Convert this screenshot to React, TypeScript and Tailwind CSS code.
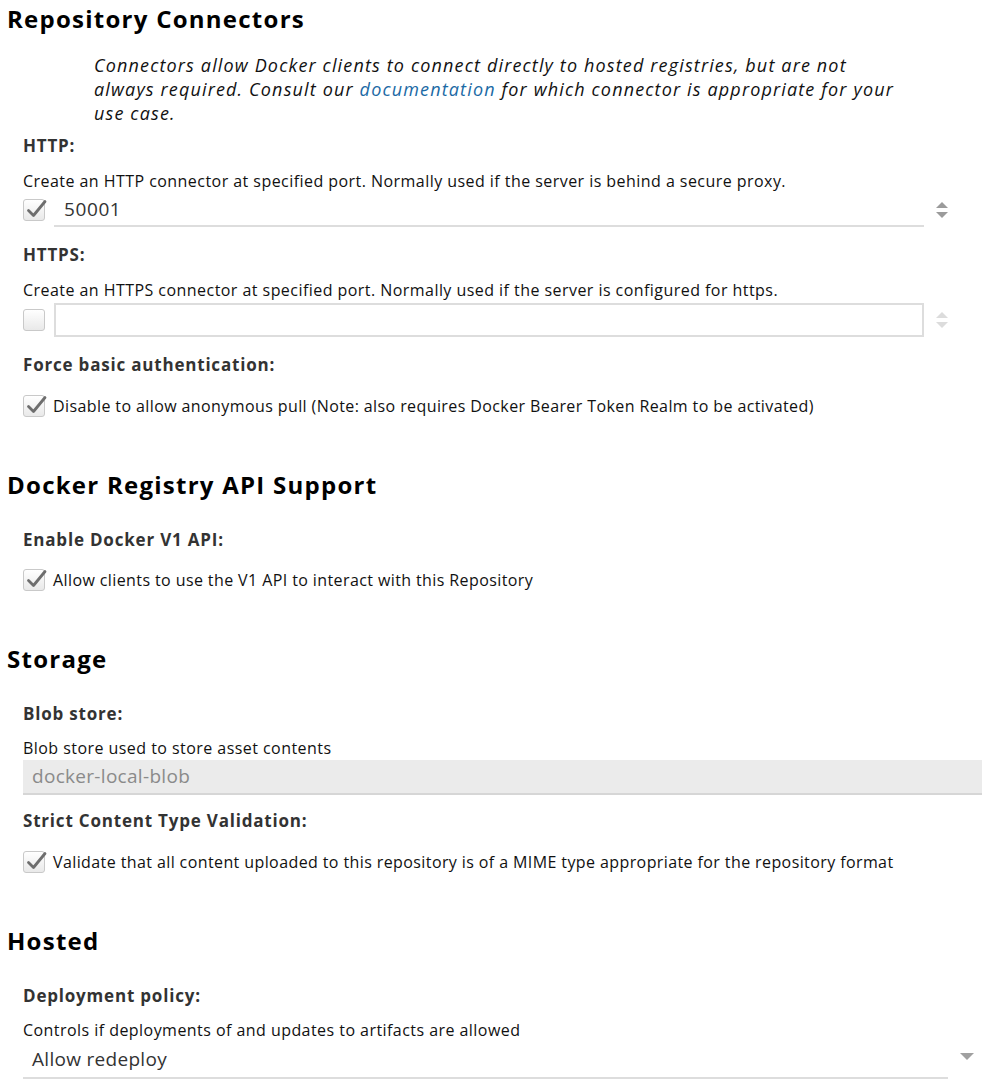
import React from "react";

function Check({ checked }: { checked: boolean }) {
  return (
    <span className="relative inline-block w-[22px] h-[22px] shrink-0 rounded-[3px] border border-[#c9c9c9] bg-linear-to-b from-[#ffffff] to-[#e9e9e9]">
      {checked && (
        <svg className="absolute left-[1px] top-[-3px]" width="24" height="24" viewBox="0 0 24 24">
          <path d="M3.5 13.5 L8.5 18.5 L20 4.5" fill="none" stroke="#6e6e6e" strokeWidth="2.8" strokeLinecap="round" strokeLinejoin="round" />
        </svg>
      )}
    </span>
  );
}

function Spinner({ light }: { light?: boolean }) {
  const c = light ? "#dcdcdc" : "#9b9b9b";
  return (
    <svg width="14" height="18" viewBox="0 0 14 18">
      <path d="M1 7 L7 1 L13 7 Z" fill={c} />
      <path d="M1 11 L13 11 L7 17 Z" fill={c} />
    </svg>
  );
}

function SectionTitle({ children, className = "" }: { children: React.ReactNode; className?: string }) {
  return (
    <h2 className={"text-[24px] leading-[30px] font-bold tracking-[1.25px] text-black pl-[7px] " + className}>{children}</h2>
  );
}

function Label({ children, className = "" }: { children: React.ReactNode; className?: string }) {
  return (
    <div className={"text-[17px] leading-[24px] font-bold tracking-[0.8px] text-[#333333] pl-[23px] " + className}>
      {children}
    </div>
  );
}

function Desc({ children, className = "" }: { children: React.ReactNode; className?: string }) {
  return (
    <div className={"text-[16px] leading-[20px] tracking-[0.45px] text-[#111111] pl-[23px] whitespace-nowrap " + className}>
      {children}
    </div>
  );
}

function CheckRow({ checked, text, className = "" }: { checked: boolean; text: string; className?: string }) {
  return (
    <div className={"flex items-center h-[24px] pl-[23px] gap-[8px] " + className}>
      <Check checked={checked} />
      <span className="text-[16px] tracking-[0.4px] text-[#111111] whitespace-nowrap">{text}</span>
    </div>
  );
}

export default function App() {
  return (
    <div
      className="w-[990px] min-h-[1088px] bg-white pt-[4px] overflow-hidden"
      style={{ fontFamily: "'Open Sans', 'Liberation Sans', sans-serif" }}
    >
      <SectionTitle>Repository Connectors</SectionTitle>
      <p className="mt-[19px] ml-[94px] text-[18px] leading-[24px] italic tracking-[1.15px] text-[#111111] whitespace-nowrap">
        Connectors allow Docker clients to connect directly to hosted registries, but are not
        <br />
        always required. Consult our <span className="text-[#1b6aa5]">documentation</span> for which connector is appropriate for your
        <br />
        use case.
      </p>

      <Label className="mt-[9px]">HTTP:</Label>
      <Desc className="mt-[13px]">Create an HTTP connector at specified port. Normally used if the server is behind a secure proxy.</Desc>
      <div className="mt-[2px] pl-[23px] flex items-center h-[34px]">
        <Check checked={true} />
        <div className="ml-[9px] w-[870px] h-[34px] border-b-2 border-[#dddddd] flex items-center pl-[10px] text-[19px] tracking-[0.6px] text-[#333333]">
          50001
        </div>
        <div className="ml-[11px] flex items-center">
          <Spinner />
        </div>
      </div>

      <Label className="mt-[16px]">HTTPS:</Label>
      <Desc className="mt-[13px]">Create an HTTPS connector at specified port. Normally used if the server is configured for https.</Desc>
      <div className="mt-[3px] pl-[23px] flex items-center h-[34px]">
        <Check checked={false} />
        <div className="ml-[9px] w-[870px] h-[34px] border-2 border-[#dddddd]" />
        <div className="ml-[11px] flex items-center">
          <Spinner light />
        </div>
      </div>

      <Label className="mt-[16px]">Force basic authentication:</Label>
      <CheckRow
        className="mt-[17px]"
        checked={true}
        text="Disable to allow anonymous pull (Note: also requires Docker Bearer Token Realm to be activated)"
      />

      <SectionTitle className="mt-[52px]">Docker Registry API Support</SectionTitle>
      <Label className="mt-[28px]">Enable Docker V1 API:</Label>
      <CheckRow className="mt-[16px]" checked={true} text="Allow clients to use the V1 API to interact with this Repository" />

      <SectionTitle className="mt-[52px]">Storage</SectionTitle>
      <Label className="mt-[28px]">Blob store:</Label>
      <Desc className="mt-[12px]">Blob store used to store asset contents</Desc>
      <div className="mt-[2px] ml-[23px] w-[959px] h-[35px] bg-[#ebebeb] border-b-2 border-[#d6d6d6] flex items-center pl-[9px] text-[19px] tracking-[0.3px] text-[#8a8a8a]">
        docker-local-blob
      </div>
      <Label className="mt-[14px]">Strict Content Type Validation:</Label>
      <CheckRow
        className="mt-[17px]"
        checked={true}
        text="Validate that all content uploaded to this repository is of a MIME type appropriate for the repository format"
      />

      <SectionTitle className="mt-[52px]">Hosted</SectionTitle>
      <Label className="mt-[28px]">Deployment policy:</Label>
      <Desc className="mt-[12px]">Controls if deployments of and updates to artifacts are allowed</Desc>
      <div className="mt-[2px] ml-[23px] flex items-center">
        <div className="w-[925px] h-[37px] border-b-2 border-[#dddddd] flex items-center pl-[9px] text-[19px] tracking-[0.3px] text-[#333333]">
          Allow redeploy
        </div>
        <svg className="ml-[12px] mb-[8px]" width="14" height="8" viewBox="0 0 14 8">
          <path d="M0 0 L14 0 L7 7 Z" fill="#a0a0a0" />
        </svg>
      </div>
    </div>
  );
}
